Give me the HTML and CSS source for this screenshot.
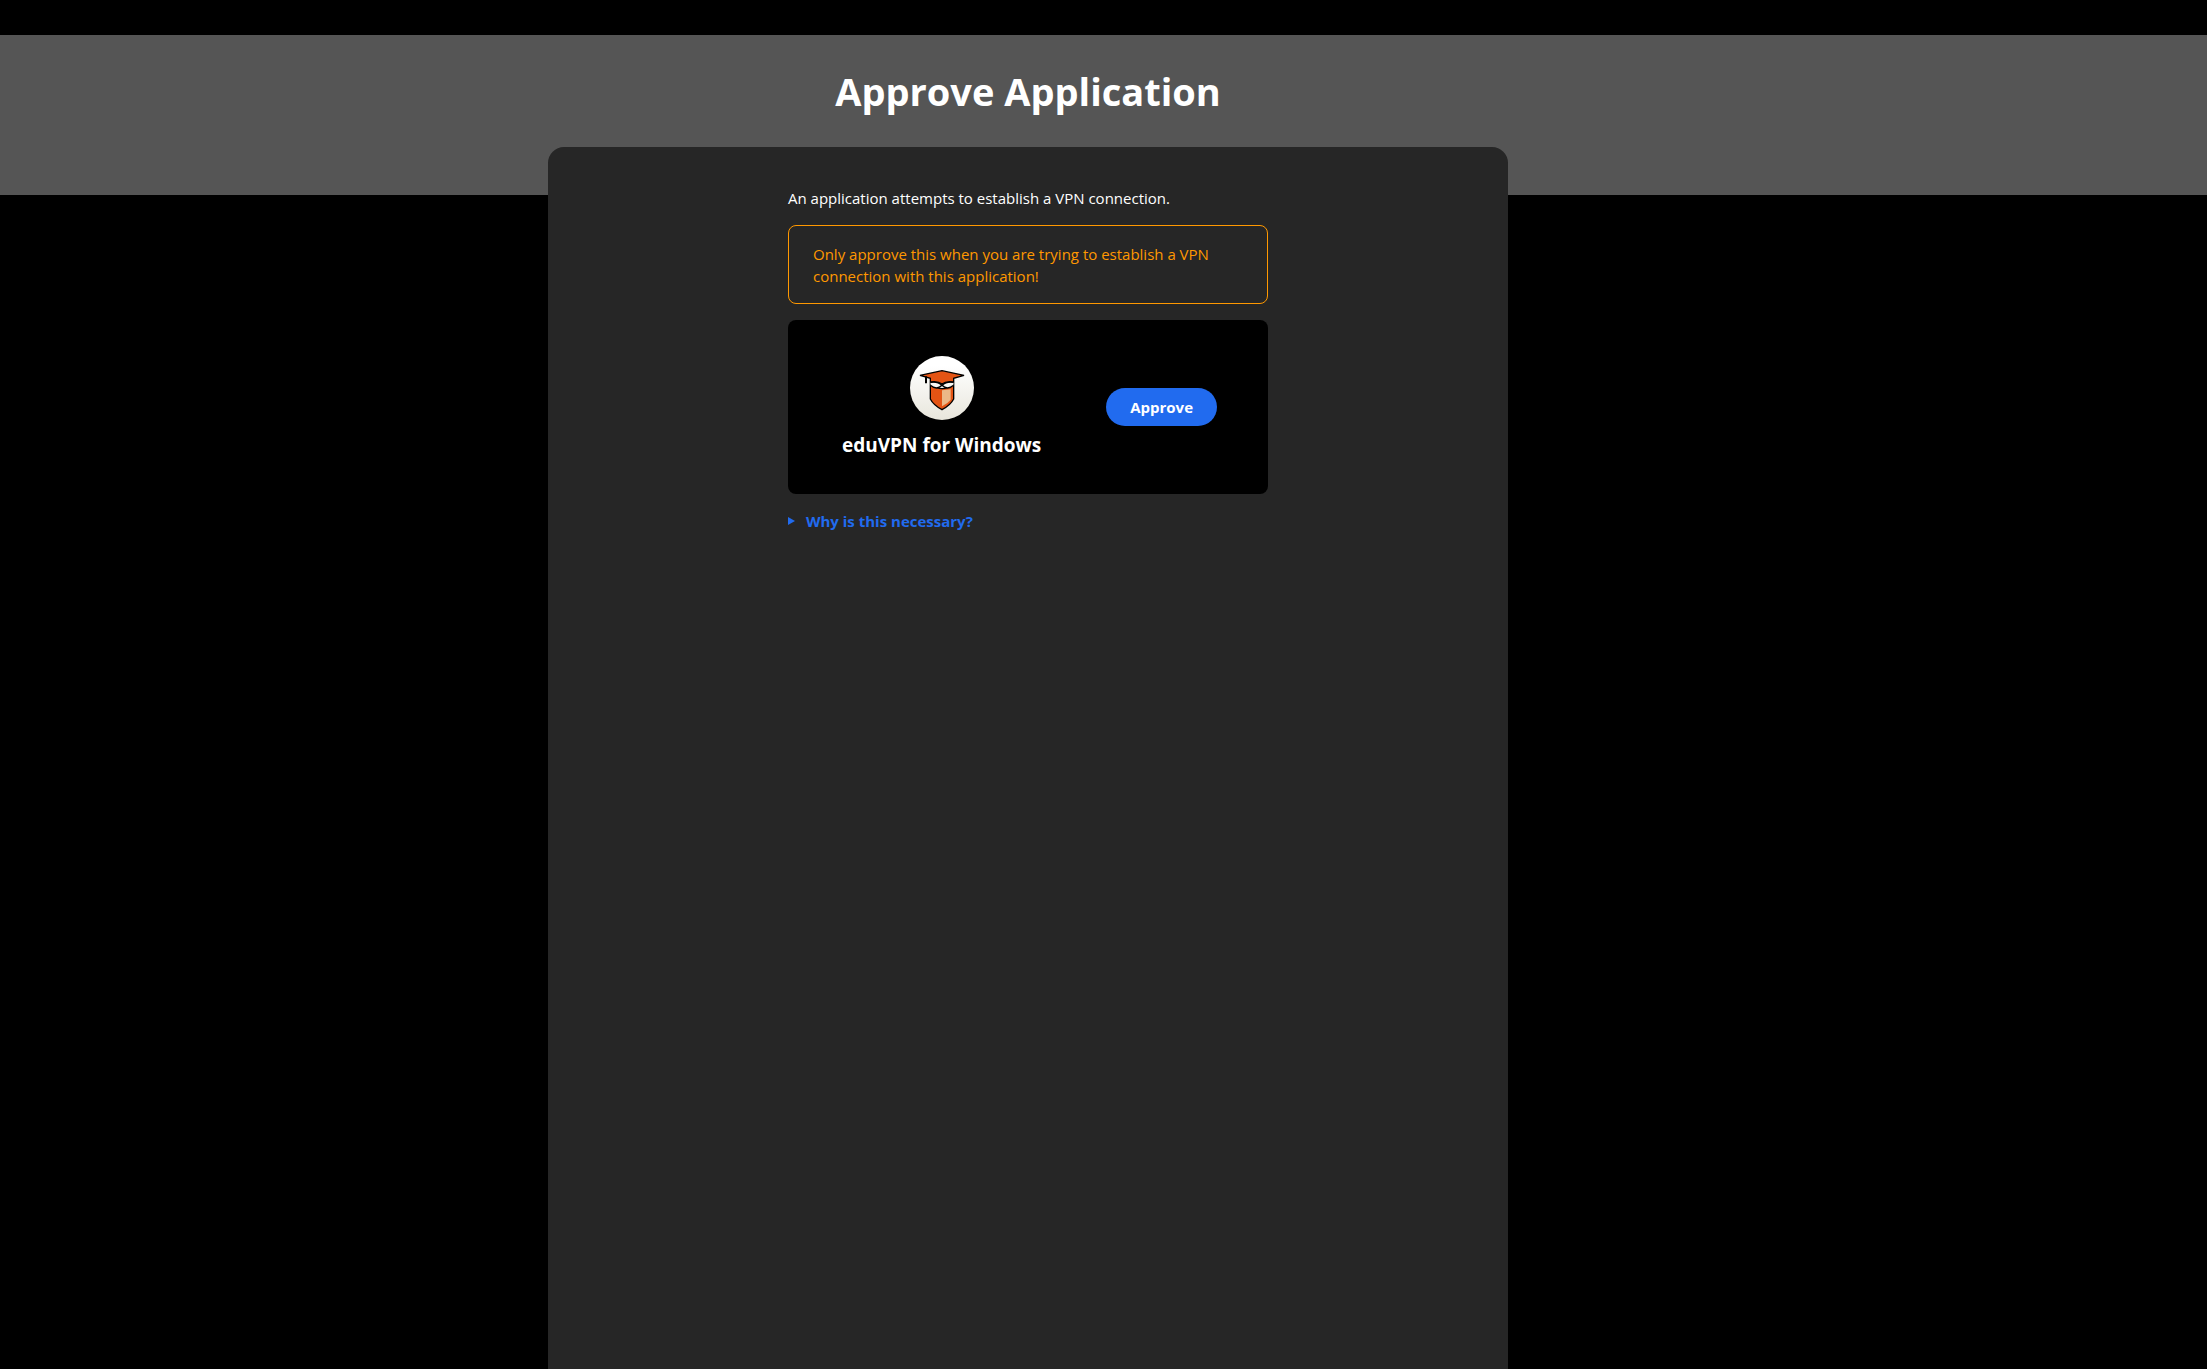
FILE: index.html
```html
<!DOCTYPE html>
<html lang="en">
<head>
    <meta charset="UTF-8">
    <meta name="viewport" content="width=device-width, initial-scale=1.0">
    <title>Approve Application</title>

    <link rel="stylesheet" href="styles.css">
</head>
<body>
    <header>
        <h1>Approve Application</h1>
    </header>

    <main>
        <div class="card">
            <div class="content">
                <p>An application attempts to establish a VPN connection.</p>

                <p class="warning">Only approve this when you are trying to establish a VPN connection with this application!</p>

                <form class="app" method="post">
                    <div class="app-info">
                        <svg class="logo" viewBox="0 0 192 192" aria-hidden="true">
                            <defs>
                                <linearGradient id="disc" x1="0" y1="0" x2="0" y2="1">
                                    <stop offset="0.15" stop-color="#ffffff"/>
                                    <stop offset="1" stop-color="#e8e6dc"/>
                                </linearGradient>
                            </defs>
                            <circle cx="96" cy="96" r="96" fill="url(#disc)"/>
                            <!-- shield -->
                            <path d="M61 84V129Q70 147 96 161Q122 147 131 129V84Q96 112 61 84Z" fill="#e45414" stroke="#000" stroke-width="4"/>
                            <path d="M96 103L122 100V131Q113 143 96 151Z" fill="#ebb887"/>
                            <!-- glasses -->
                            <path d="M62 78Q80 74 96 84Q112 74 130 78V89Q112 102 96 90Q80 102 62 89Z" fill="#f8f8f4"/>
                            <path d="M61 88Q80 104 96 88Q112 104 131 88M61 79Q82 75 96 88Q110 75 131 79" fill="none" stroke="#000" stroke-width="4"/>
                            <!-- cap -->
                            <path d="M30 58L96 44L162 58L131 67V78Q108 74 96 84Q84 74 61 78V67Z" fill="#e45414" stroke="#000" stroke-width="4"/>
                            <path d="M48 61V82" stroke="#000" stroke-width="6"/>
                        </svg>
                        <span class="app-name">eduVPN for Windows</span>
                    </div>
                    <button type="submit">Approve</button>
                </form>

                <details>
                    <summary>Why is this necessary?</summary>
                </details>
            </div>
        </div>
    </main>
</body>
</html>
```
FILE: styles.css
```css
* {
    box-sizing: border-box;
}
body {
    display: flex;
    flex-direction: column;
    min-height: 100vh;
    margin: 0;
    padding-top: 35px;
    background-color: #000;
    color: #fff;
    font-family: "Segoe UI", "Open Sans", sans-serif;
    font-size: 15px;
    line-height: 22px;
}
header {
    padding: 28px 151px 76px 0;
    background-color: #555;
    text-align: center;
}
h1 {
    margin: 0;
    font-size: 38px;
    line-height: 56px;
}
/* pulled up over the header band */
main {
    display: flex;
    flex: 1;
    justify-content: center;
    margin-top: -48px;
    padding-right: 151px;
}
.card {
    width: 100%;
    max-width: 960px;
    padding: 40px 24px;
    border-radius: 16px 16px 0 0;
    background-color: #262626;
}
.content {
    display: flex;
    flex-direction: column;
    gap: 16px;
    max-width: 480px;
    margin: 0 auto;
}
p {
    margin: 0;
}
.warning {
    padding: 17px 24px 16px;
    border: 1px solid #ff9800;
    border-radius: 8px;
    color: #ff9800;
}
.app {
    display: flex;
    align-items: center;
    justify-content: space-between;
    padding: 36px 51px 36px 54px;
    border-radius: 8px;
    background-color: #000;
}
.app-info {
    display: flex;
    flex-direction: column;
    align-items: center;
    gap: 12px;
}
.logo {
    width: 64px;
    height: 64px;
}
.app-name {
    font-size: 19px;
    font-weight: bold;
    line-height: 26px;
}
button {
    padding: 8px 24px;
    border: none;
    border-radius: 19px;
    background-color: #216bef;
    color: #fff;
    font: inherit;
    font-weight: bold;
    cursor: pointer;
}
summary {
    display: flex;
    align-items: center;
    gap: 11px;
    color: #216bef;
    font-weight: bold;
    cursor: pointer;
}
summary::before {
    content: "";
    border-left: 7px solid #216bef;
    border-top: 4px solid transparent;
    border-bottom: 4px solid transparent;
}
```
